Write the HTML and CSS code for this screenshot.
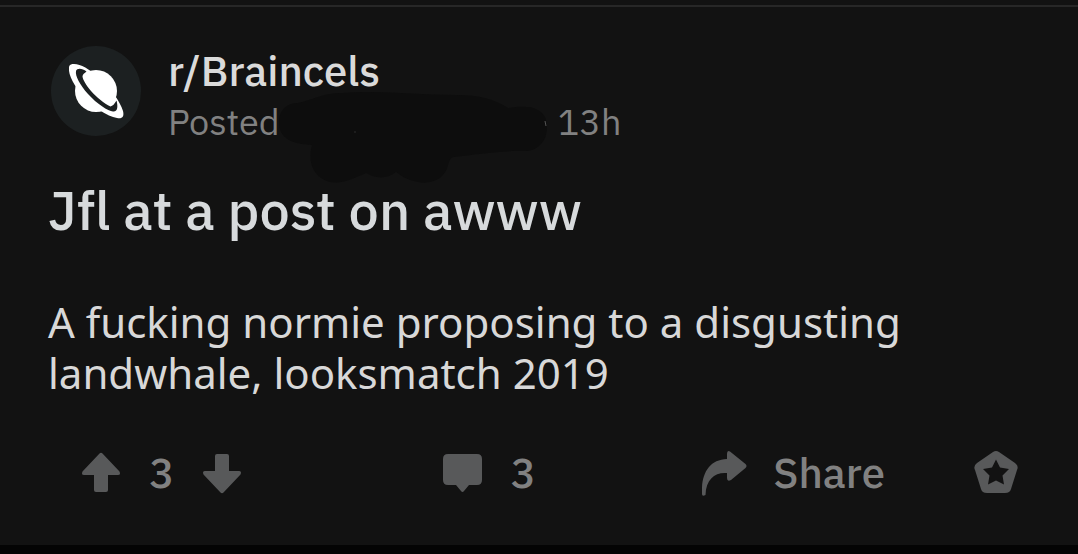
FILE: index.html
```html
<!DOCTYPE html>
<html lang="en">
<head>
<meta charset="utf-8">
<meta name="viewport" content="width=device-width, initial-scale=1">
<title>Jfl at a post on awww</title>
<link rel="stylesheet" href="styles.css">
</head>
<body>
<article class="post">
  <header class="post-header">
    <svg class="avatar" viewBox="0 0 90 90" aria-hidden="true">
      <circle cx="45" cy="45" r="45" fill="#1c2021"/>
      <circle cx="45" cy="45" r="21" fill="#fff"/>
      <path fill="#fff" fill-rule="evenodd" d="M20 18.500C27 16.500 37 22 47 31C59 41 69 55 72 65C73.500 71 71 73 66 72C56 70 43 62 32 50C24 41 17 29 18 22C18 20 18.500 19 20 18.500Z"/>
      <path fill="#1c2021" d="M35.500 25.500C31 22 26 22 25 25C24 30 29 39 37 48C46 58 57 65 62 65.500C67 66 67 60 65.500 54.500C63.500 58 61.500 60 59.500 60.500C53 57.500 46 51.500 40 45C35 39 32 34 31.500 30.500C31.500 28.500 33.500 27 35.500 25.500Z"/>
    </svg>
    <div class="byline">
      <a class="community" href="#">r/Braincels</a>
      <p class="meta"><span>Posted</span><span class="age">13h</span></p>
      <svg class="scribble" viewBox="0 0 270 94" aria-hidden="true">
        <path fill="#0d0d0d" d="M20 13C38 9 44 3 65 3C105 0 135 5 178 5C202 5 216 9 230 18C250 15 261 17 267 27C273 45 264 59 250 61C229 60 199 64 176 67C173 67 171 70 170 75C168 87 155 95 140 92C128 90 123 85 118 82C107 90 97 88 88 83C76 88 67 94 52 92C36 88 29 73 34 55C20 54 7 52 2 40C-2 24 6 13 20 13Z"/>
        <circle cx="77" cy="42" r="1" fill="#222"/>
        <path d="M267 31L268 36" fill="none" stroke="#555" stroke-width="1"/>
      </svg>
    </div>
  </header>
  <h1 class="title">Jfl at a post on awww</h1>
  <p class="body">A fucking normie proposing to a disgusting landwhale, looksmatch 2019</p>
  <footer class="actions">
    <div class="action votes">
      <button class="button" aria-label="Upvote"><svg width="40" height="42" viewBox="0 0 40 42"><path d="M18.500 1.500Q20 0 21.500 1.500L38.500 19.500Q40 23 37 23H27V38Q27 40 25 40H15Q13 40 13 38V23H3Q0 23 1.500 19.500Z"/></svg></button>
      <span class="count">3</span>
      <button class="button" aria-label="Downvote"><svg width="40" height="42" viewBox="0 0 40 42"><path d="M18.500 40.500Q20 42 21.500 40.500L38.500 22.500Q40 19 37 19H27V4Q27 2 25 2H15Q13 2 13 4V19H3Q0 19 1.500 22.500Z"/></svg></button>
    </div>
    <button class="button action comments" aria-label="3 comments"><svg width="40" height="42" viewBox="0 0 40 42"><path d="M5 2H34Q39 2 39 7V28Q39 33 34 33H26L21 39Q19.500 41 18 39L13 33H5Q0 33 0 28V7Q0 2 5 2Z"/></svg><span>3</span></button>
    <button class="button action share"><svg width="45" height="46" viewBox="0 0 45 46"><path d="M25 9V4Q25 0 28 1.500L43.500 14Q45.500 16 43.500 18L29 30Q25 32 25 28V23C13 22 4 29 3.500 45Q0 47 0 44C-1 24 7 9.500 25 9Z"/></svg><span>Share</span></button>
    <button class="button" aria-label="Give award"><svg width="44" height="46" viewBox="0 0 44 46"><path fill-rule="evenodd" d="M19 2Q22 0 25 2L41 13Q45 16 43 20L37 39Q36 43 31 43H13Q8 43 7 39L1 20Q-1 16 3 13ZM22 9.500L18 17.500L9 19L15.500 25.500L14 34.500L22 30.500L30 34.500L28.500 25.500L35 19L26 17.500Z"/></svg></button>
  </footer>
</article>
</body>
</html>
```

FILE: styles.css
```css
* { box-sizing: border-box; }

html { background: #040404; }

body {
  margin: 0;
  padding-top: 5px;
  background: linear-gradient(#121212 8px, #040404 8px);
  color: #d7dadc;
  font-family: "IBM Plex Sans", Roboto, sans-serif;
}

.post {
  padding: 39px 48px 47px;
  background: #121212;
  border-top: 2px solid #272727;
}

.post-header {
  display: flex;
  gap: 27px;
  padding-left: 3px;
}

.avatar {
  flex: none;
  width: 90px;
  height: 90px;
}

.byline { position: relative; }

.community {
  display: block;
  color: #dadada;
  font-size: 42px;
  font-weight: 500;
  line-height: 50px;
  text-decoration: none;
}

.meta {
  display: flex;
  gap: 278px;
  margin: 0;
  color: #818181;
  font-size: 36px;
  line-height: 52px;
}

.scribble {
  position: absolute;
  top: 44px;
  left: 110px;
  width: 270px;
  height: 94px;
}

.title {
  margin: 29px 0 0;
  font-size: 54px;
  font-weight: 500;
  line-height: 66px;
}

.body {
  margin: 53px 0 0;
  color: #d8d8d8;
  font-family: "Noto Sans", sans-serif;
  font-size: 42px;
  line-height: 51px;
}

.actions {
  display: grid;
  grid-template-columns: 362fr 260fr 272fr auto;
  align-items: center;
  margin-top: 50px;
  padding: 0 12px 0 33px;
  color: #818181;
  font-size: 42px;
  font-weight: 500;
  line-height: 50px;
}

.action {
  display: flex;
  align-items: center;
  gap: 28px;
}

.button {
  padding: 0;
  border: 0;
  background: none;
  color: inherit;
  font: inherit;
  cursor: pointer;
}

.button.share { gap: 26px; }

.button svg {
  display: block;
  flex: none;
  fill: #58595a;
}
```
